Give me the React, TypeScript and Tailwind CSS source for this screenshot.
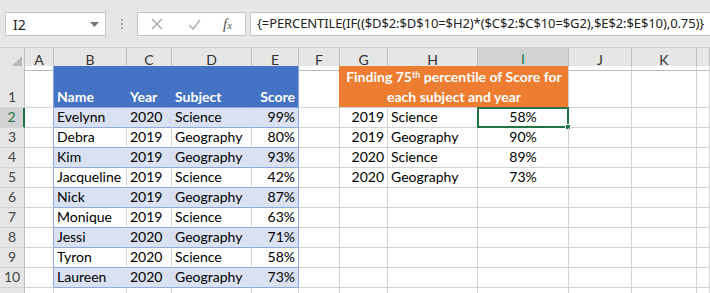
import React from "react";

const COLS = ["A", "B", "C", "D", "E", "F", "G", "H", "I", "J", "K", ""];

const TABLE = [
  ["Evelynn", "2020", "Science", "99%"],
  ["Debra", "2019", "Geography", "80%"],
  ["Kim", "2019", "Geography", "93%"],
  ["Jacqueline", "2019", "Science", "42%"],
  ["Nick", "2019", "Geography", "87%"],
  ["Monique", "2019", "Science", "63%"],
  ["Jessi", "2020", "Geography", "71%"],
  ["Tyron", "2020", "Science", "58%"],
  ["Laureen", "2020", "Geography", "73%"],
];

const RESULTS = [
  ["2019", "Science", "58%"],
  ["2019", "Geography", "90%"],
  ["2020", "Science", "89%"],
  ["2020", "Geography", "73%"],
];

const grid =
  "grid grid-cols-[25px_29px_73px_45px_80px_47px_41px_48px_90px_91px_63px_65px_13px]";

const cell =
  "flex items-end overflow-hidden whitespace-nowrap border-b border-r border-[#d4d4d4] px-[3px] pb-[1px] text-[14px] leading-[18px] text-black";

function RowHead({ n, active }: { n?: number; active?: boolean }) {
  return (
    <div
      className={
        "flex items-end justify-center border-b border-[#d4d4d4] pb-[1px] text-[14px] leading-[18px] " +
        (active
          ? "border-r-2 border-r-[#217346] bg-[#d2d2d2] text-[#217346]"
          : "border-r border-r-[#bdbdbd] bg-[#e6e6e6] text-[#444]")
      }
    >
      {n}
    </div>
  );
}

function FormulaBar() {
  return (
    <div className="flex h-[47px] items-start bg-[#e6e6e6] pt-[12px] font-['Noto_Sans',sans-serif]">
      <div className="ml-[5px] flex h-[24px] w-[101px] items-center justify-between border border-[#c6c6c6] bg-white pl-[7px] pr-[6px] text-[14px] text-[#222]">
        <span>I2</span>
        <svg width="9" height="5" viewBox="0 0 9 5">
          <path d="M0 0h9L4.5 5z" fill="#777" />
        </svg>
      </div>
      <div className="flex h-[24px] w-[31px] flex-col items-center justify-center gap-[2px]">
        <span className="h-[2px] w-[2px] bg-[#a8a8a8]" />
        <span className="h-[2px] w-[2px] bg-[#a8a8a8]" />
        <span className="h-[2px] w-[2px] bg-[#a8a8a8]" />
      </div>
      <div className="flex h-[24px] w-[109px] items-center border border-[#c6c6c6] bg-white">
        <svg className="ml-[13px]" width="12" height="12" viewBox="0 0 12 12">
          <path d="M1 1l10 10M11 1L1 11" stroke="#a6a6a6" strokeWidth="1.3" />
        </svg>
        <svg className="ml-[25px]" width="13" height="11" viewBox="0 0 13 11">
          <path d="M1 6l4 4 7-9" stroke="#b4b4b4" strokeWidth="1.6" fill="none" />
        </svg>
        <span className="ml-[22px] font-['Liberation_Serif',serif] text-[15px] italic text-[#555]">
          f<span className="text-[11px]">x</span>
        </span>
      </div>
      <div className="ml-[4px] flex h-[24px] flex-1 items-center overflow-hidden whitespace-nowrap border border-r-0 border-[#c6c6c6] bg-white pl-[6px] text-[13px] tracking-[-0.1px] text-[#222]">
        {"{=PERCENTILE(IF(($D$2:$D$10=$H2)*($C$2:$C$10=$G2),$E$2:$E$10),0.75)}"}
      </div>
    </div>
  );
}

function ColumnHeaders() {
  return (
    <div className={grid + " h-[19px] border-t border-[#d0d0d0] bg-[#e6e6e6] font-['Lato',sans-serif]"}>
      <div className="flex items-end justify-end border-b border-r border-[#bdbdbd] p-[2px]">
        <svg width="12" height="12" viewBox="0 0 12 12">
          <path d="M12 0v12H0z" fill="#b8b8b8" />
        </svg>
      </div>
      {COLS.map((c, i) =>
        c === "I" ? (
          <div
            key={i}
            className="flex items-center justify-center border-b-2 border-r border-b-[#217346] border-r-[#bdbdbd] bg-[#d2d2d2] text-[14px] text-[#217346]"
          >
            {c}
          </div>
        ) : (
          <div
            key={i}
            className="flex items-center justify-center border-b border-r border-[#bdbdbd] text-[14px] text-[#333]"
          >
            {c}
          </div>
        )
      )}
    </div>
  );
}

export default function App() {
  return (
    <div className="h-[293px] w-[710px] overflow-hidden bg-white">
      <FormulaBar />
      <ColumnHeaders />
      <div className="font-['Lato',sans-serif]">
        {/* row 1 */}
        <div className={grid + " h-[42px]"}>
          <RowHead n={1} />
          <div className={cell + " border-r-[#8ea9db]"} />
          <div className={cell + " border-b-[#8ea9db] border-r-[#4472c4] bg-[#4472c4] font-bold text-white"}>Name</div>
          <div className={cell + " border-b-[#8ea9db] border-r-[#4472c4] bg-[#4472c4] font-bold text-white"}>Year</div>
          <div className={cell + " border-b-[#8ea9db] border-r-[#4472c4] bg-[#4472c4] font-bold text-white"}>Subject</div>
          <div className={cell + " justify-end border-b-[#8ea9db] border-r-[#8ea9db] bg-[#4472c4] font-bold text-white"}>Score</div>
          <div className={cell + " border-r-[#ed7d31]"} />
          <div className="col-span-3 flex flex-col items-center justify-center border-b border-r border-[#d4d4d4] bg-[#ed7d31] pt-[1px] text-[14px] font-bold leading-[20px] text-white">
            <span>
              Finding 75<sup className="text-[9px]">th</sup> percentile of Score for
            </span>
            <span>each subject and year</span>
          </div>
          <div className={cell} />
          <div className={cell} />
          <div className={cell} />
        </div>

        {TABLE.map((r, i) => {
          const band = i % 2 === 0;
          const inner = band ? " bg-[#d9e1f2] border-r-[#d9e1f2]" : "";
          const res = RESULTS[i];
          return (
            <div key={i} className={grid + " h-[20px]"}>
              <RowHead n={i + 2} active={i === 0} />
              <div className={cell + " border-r-[#8ea9db]"} />
              <div className={cell + " border-b-[#8ea9db]" + inner}>{r[0]}</div>
              <div className={cell + " border-b-[#8ea9db]" + inner}>{r[1]}</div>
              <div className={cell + " border-b-[#8ea9db]" + inner}>{r[2]}</div>
              <div
                className={
                  cell +
                  " justify-end border-b-[#8ea9db] border-r-[#8ea9db]" +
                  (band ? " bg-[#d9e1f2]" : "")
                }
              >
                {r[3]}
              </div>
              <div className={cell} />
              <div className={cell + " justify-end"}>{res ? res[0] : ""}</div>
              <div className={cell}>{res ? res[1] : ""}</div>
              <div className={cell + " relative justify-center overflow-visible"}>
                {res ? res[2] : ""}
                {i === 0 && (
                  <>
                    <div className="absolute -inset-[1px] border-2 border-[#217346]" />
                    <div className="absolute -bottom-[3px] -right-[3px] h-[6px] w-[6px] border border-white bg-[#217346]" />
                  </>
                )}
              </div>
              <div className={cell} />
              <div className={cell} />
              <div className={cell} />
            </div>
          );
        })}

        {/* row 11, only its top edge shows */}
        <div className={grid + " h-[20px]"}>
          <RowHead />
          {COLS.map((c, i) => (
            <div key={i} className={cell} />
          ))}
        </div>
      </div>
    </div>
  );
}
